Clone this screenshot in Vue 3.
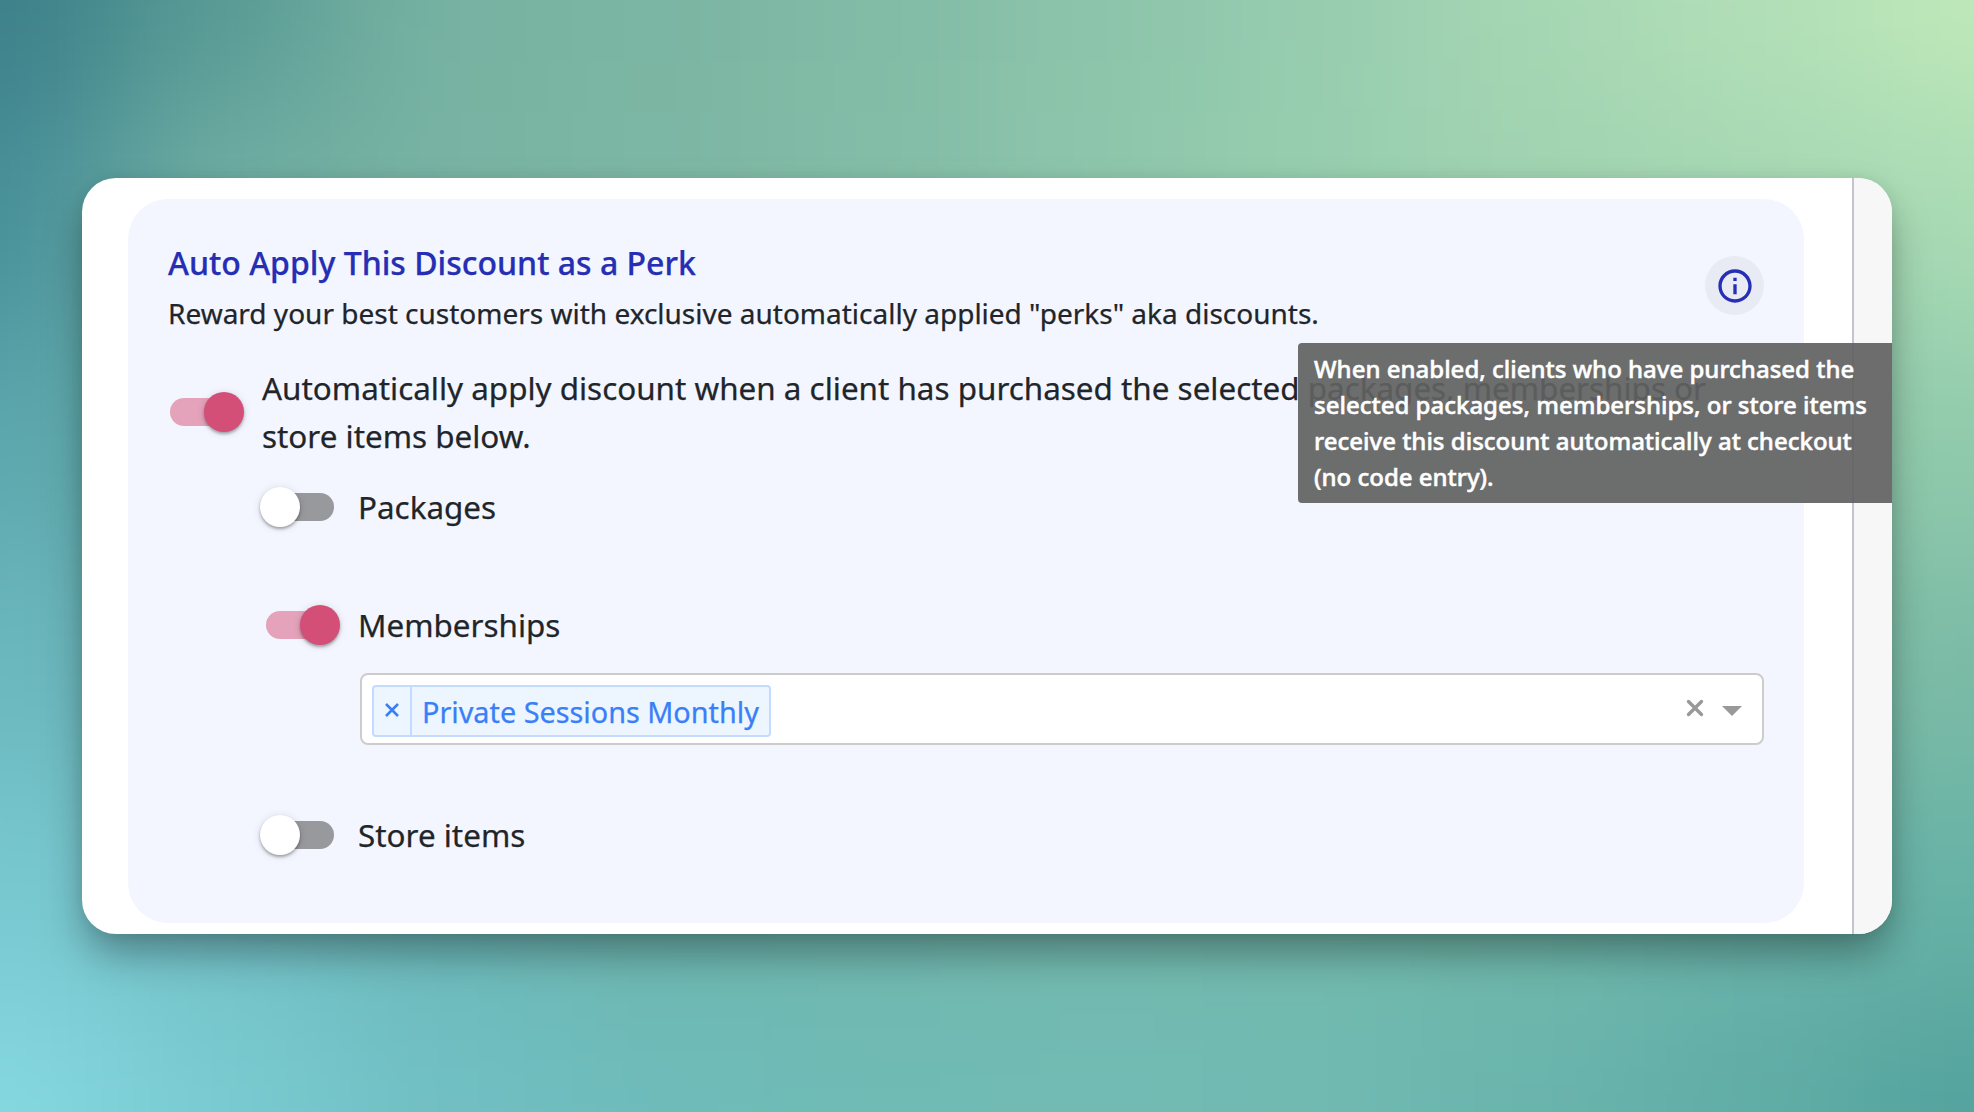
<template>
  <div class="stage">
    <div class="backdrop">
      <span v-for="(color, i) in backdropColors" :key="i" :style="{ background: color }"></span>
    </div>

    <div class="window">
      <main class="content">
        <section class="panel">
          <header class="panel-header">
            <div class="titles">
              <h2>Auto Apply This Discount as a Perk</h2>
              <p>Reward your best customers with exclusive automatically applied "perks" aka discounts.</p>
            </div>
            <button class="info-button" type="button" aria-label="Info">
              <svg viewBox="0 0 24 24" width="40" height="40">
                <path
                  fill="currentColor"
                  d="M11 7h2v2h-2zm0 4h2v6h-2zm1-9C6.48 2 2 6.48 2 12s4.48 10 10 10 10-4.48 10-10S17.52 2 12 2m0 18c-4.41 0-8-3.59-8-8s3.59-8 8-8 8 3.59 8 8-3.59 8-8 8"
                />
              </svg>
            </button>
            <div class="tooltip" role="tooltip">
              When enabled, clients who have purchased the selected packages, memberships, or store items receive
              this discount automatically at checkout (no code entry).
            </div>
          </header>

          <div class="main-row">
            <button class="switch" :class="{ on: autoApply }" type="button" @click="autoApply = !autoApply">
              <span class="thumb"></span>
            </button>
            <p class="main-label">
              Automatically apply discount when a client has purchased the selected packages, memberships or
              store items below.
            </p>
          </div>

          <div v-for="item in items" :key="item.name" class="item" :class="item.name">
            <div class="item-row">
              <button class="switch" :class="{ on: item.on }" type="button" @click="item.on = !item.on">
                <span class="thumb"></span>
              </button>
              <span class="item-label">{{ item.label }}</span>
            </div>
            <div v-if="item.selected.length" class="select">
              <div v-for="value in item.selected" :key="value" class="tag">
                <span class="tag-remove">
                  <svg viewBox="0 0 14 14" width="14" height="14">
                    <path d="M1 1l12 12M13 1L1 13" stroke="currentColor" stroke-width="2.6" fill="none" />
                  </svg>
                </span>
                <span class="tag-label">{{ value }}</span>
              </div>
              <div class="indicators">
                <svg class="clear" viewBox="0 0 18 18" width="18" height="18">
                  <path d="M2.5 2.5l13 13M15.5 2.5l-13 13" stroke="currentColor" stroke-width="3.4" stroke-linecap="round" />
                </svg>
                <span class="arrow"></span>
              </div>
            </div>
          </div>
        </section>
      </main>
      <aside class="gutter"></aside>
    </div>
  </div>
</template>

<script setup>
import { ref } from 'vue'

const autoApply = ref(true)

const items = ref([
  { name: 'packages', label: 'Packages', on: false, selected: [] },
  { name: 'memberships', label: 'Memberships', on: true, selected: ['Private Sessions Monthly'] },
  { name: 'store-items', label: 'Store items', on: false, selected: [] }
])

// 10 x 6 colour cells, blurred together into the wallpaper
const backdropColors = [
  '#3c7f89', '#579a94', '#77b2a2', '#7bb5a3', '#82bba6', '#8cc4ab', '#97ccaf', '#a6d7b3', '#b2dfb7', '#bfe9b9',
  '#47909a', '#72b0a4', '#78b3a3', '#7db7a4', '#84bda7', '#8ec6ac', '#97cfaf', '#a0d2b1', '#a4d7b3', '#a9dbb4',
  '#5ca7ae', '#66aea9', '#76b2a4', '#7db7a4', '#83bda6', '#8bc4aa', '#90c9ab', '#92caac', '#92cbac', '#90caac',
  '#6bb8bf', '#6bb4b5', '#72b3a8', '#78b6a6', '#7cbaa7', '#80bfa8', '#83c2a9', '#83c1a9', '#80bea8', '#7bbba6',
  '#79c9d1', '#72c0c6', '#6cb8b9', '#6eb6ae', '#70b7ae', '#73b9ad', '#73b9ab', '#70b8aa', '#6ab3a9', '#67b2a6',
  '#86d8e1', '#7accd2', '#71c0c4', '#6ebcbb', '#70bbb5', '#71bbb5', '#70bab3', '#69b4ad', '#60ada7', '#53a29d'
]
</script>

<style>
body {
  margin: 0;
}
</style>

<style scoped>
.stage {
  position: relative;
  box-sizing: border-box;
  width: 1974px;
  height: 1112px;
  padding: 178px 82px;
  overflow: hidden;
  background: #74b5a6;
  color: #212529;
  font-family: 'Noto Sans', sans-serif;
  -webkit-text-stroke: 0.25px currentColor;
}

.backdrop {
  position: absolute;
  inset: -250px;
  display: grid;
  grid-template-columns: 360px repeat(8, 1fr) 360px;
  grid-template-rows: 360px repeat(4, 1fr) 360px;
  filter: blur(75px);
}

.window {
  position: relative;
  display: flex;
  width: 1810px;
  height: 756px;
  border-radius: 34px;
  background: #fff;
  box-shadow: 0 22px 42px -4px rgba(0, 0, 0, 0.36), 0 0 14px rgba(0, 0, 0, 0.06);
}

.content {
  box-sizing: border-box;
  width: 1770px;
  padding: 21px 0 0 46px;
}

.gutter {
  flex: 1;
  border-left: 2px solid #c5c3cf;
  border-radius: 0 34px 34px 0;
  background: #f7f7f7;
}

.panel {
  box-sizing: border-box;
  width: 1676px;
  height: 724px;
  padding: 40px 40px 0;
  border-radius: 40px;
  background: #f3f6ff;
}

.panel-header {
  position: relative;
  display: flex;
  justify-content: space-between;
  height: 125px;
}

h2,
p {
  margin: 0;
}

h2 {
  color: #262eb4;
  font-size: 32px;
  font-weight: 500;
  line-height: 48px;
}

.titles p {
  margin-top: 5px;
  font-size: 28px;
  line-height: 42px;
}

.info-button {
  display: flex;
  align-items: center;
  justify-content: center;
  width: 59px;
  height: 59px;
  margin-top: 17px;
  padding: 0;
  border: 0;
  border-radius: 50%;
  background: #e8ebf4;
  color: #262eb4;
}

.tooltip {
  position: absolute;
  z-index: 2;
  top: 104px;
  left: 1130px;
  box-sizing: border-box;
  width: 594px;
  height: 160px;
  padding: 8px 16px;
  border-radius: 4px 0 0 4px;
  background: rgba(97, 97, 97, 0.92);
  color: #fff;
  font-size: 24px;
  font-weight: 500;
  line-height: 36px;
  -webkit-text-stroke-width: 0.5px;
}

.main-row {
  display: flex;
  align-items: center;
  height: 96px;
  margin-bottom: 23px;
}

.switch {
  display: flex;
  flex: none;
  align-items: center;
  width: 68px;
  height: 28px;
  margin-left: 2px;
  padding: 0;
  border: 0;
  border-radius: 14px;
  background: #98999d;
}

.switch.on {
  background: #e5a2bb;
}

.thumb {
  flex: none;
  width: 40px;
  height: 40px;
  margin-left: -6px;
  border-radius: 50%;
  background: #fff;
  box-shadow: 0 2px 3px rgba(0, 0, 0, 0.3), 0 1px 8px rgba(0, 0, 0, 0.12);
}

.switch.on .thumb {
  margin-left: 34px;
  background: #d44f77;
}

.main-label {
  width: 1480px;
  margin-left: 24px;
  font-size: 31.4px;
  line-height: 48px;
}

.item {
  height: 118px;
  padding-left: 96px;
}

.item.memberships {
  height: 210px;
}

.item-row {
  display: flex;
  align-items: center;
  height: 48px;
}

.item-label {
  margin-left: 24px;
  font-size: 31.4px;
  line-height: 48px;
}

.select {
  display: flex;
  align-items: center;
  box-sizing: border-box;
  width: 1404px;
  height: 72px;
  margin: 24px 0 0 96px;
  padding: 0 20px 0 10px;
  border: 2px solid #ccc;
  border-radius: 8px;
  background: #fff;
}

.tag {
  display: flex;
  box-sizing: border-box;
  height: 52px;
  margin-top: 4px;
  border: 2px solid #c2dbff;
  border-radius: 4px;
  background: #edf5ff;
  color: #397ff7;
}

.tag-remove {
  display: flex;
  align-items: center;
  justify-content: center;
  width: 36px;
  padding-bottom: 2px;
  border-right: 2px solid #c2dbff;
}

.tag-label {
  padding: 0 10px;
  font-size: 28.8px;
  line-height: 49px;
}

.indicators {
  display: flex;
  align-items: center;
  gap: 18px;
  margin-left: auto;
  color: #999;
}

.clear {
  margin-bottom: 2px;
}

.arrow {
  margin-top: 4px;
  border: 10px solid transparent;
  border-top-color: #999;
  border-bottom: 0;
}
</style>
